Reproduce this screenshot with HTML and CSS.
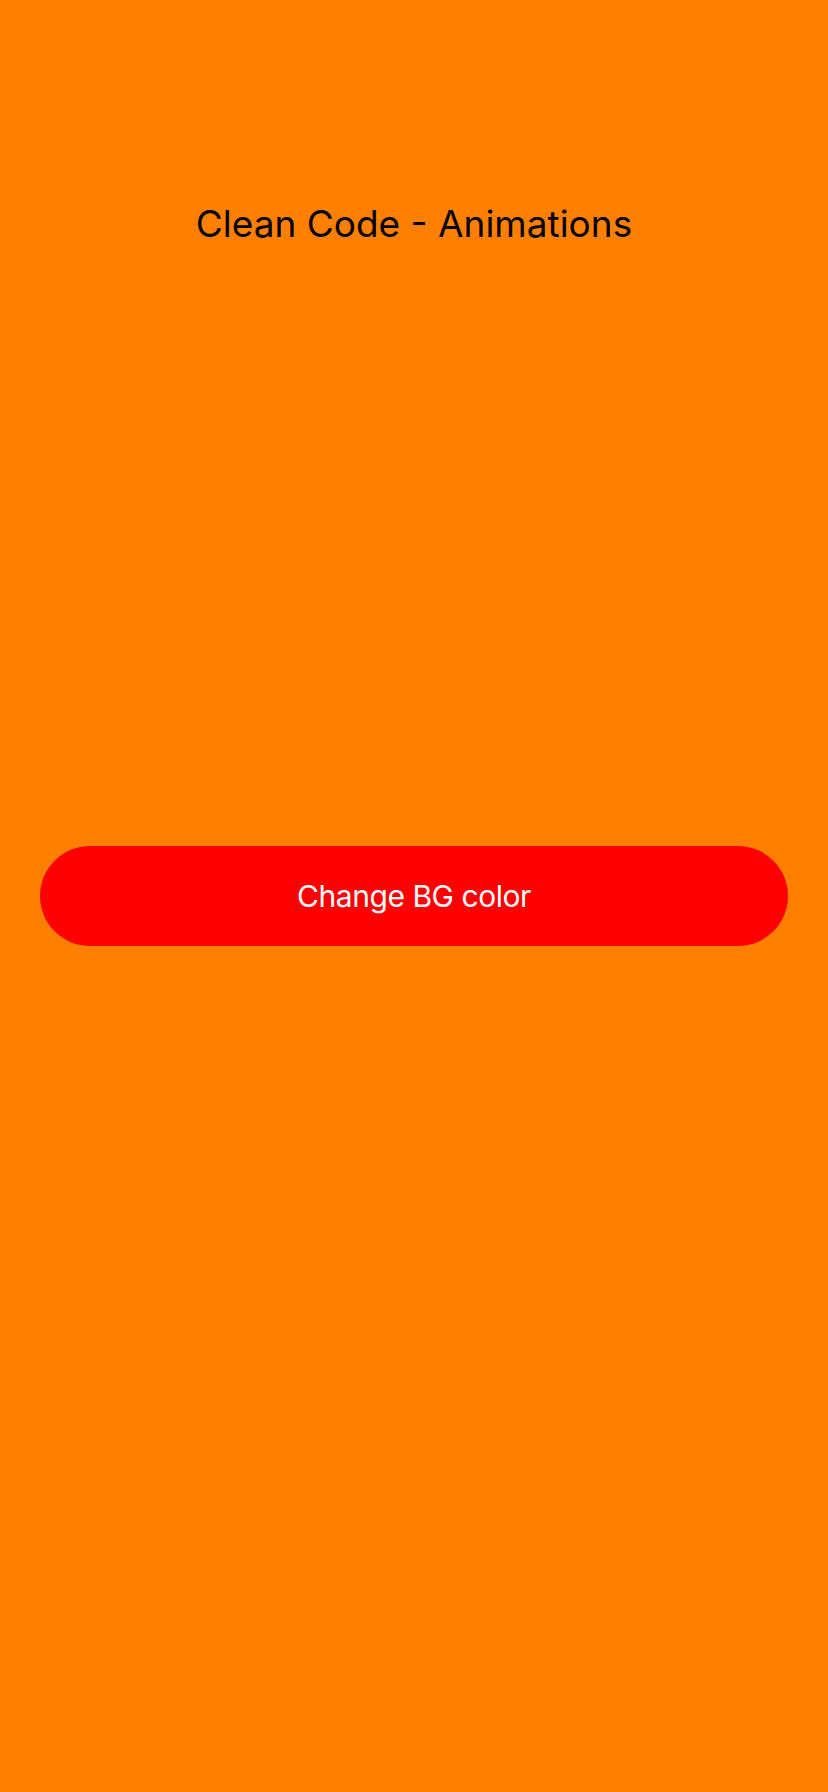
FILE: index.html
```html
<!DOCTYPE html>
<html lang="en">
<head>
<meta charset="utf-8">
<title>Clean Code - Animations</title>
<link rel="stylesheet" href="styles.css">
</head>
<body>
<main class="screen">
  <h1 class="title">Clean Code - Animations</h1>
  <button class="action" type="button">Change BG color</button>
</main>
</body>
</html>
```

FILE: styles.css
```css
html, body {
  margin: 0;
  padding: 0;
}
body {
  background: #ff8000;
  font-family: Inter, "Noto Sans", "Liberation Sans", sans-serif;
}
.screen {
  min-height: 1792px;
  box-sizing: border-box;
  display: flex;
  flex-direction: column;
  align-items: center;
  padding: 202px 40px 0;
}
.title {
  margin: 0;
  font-size: 37px;
  line-height: 44px;
  font-weight: 400;
  color: #000;
  text-align: center;
}
.action {
  margin-top: 600px;
  width: 100%;
  height: 100px;
  border: 0;
  border-radius: 50px;
  background: #ff0000;
  color: #fff;
  font-family: inherit;
  font-size: 30px;
  letter-spacing: -0.45px;
  line-height: 36px;
  display: flex;
  align-items: center;
  justify-content: center;
  padding: 0;
}
```
